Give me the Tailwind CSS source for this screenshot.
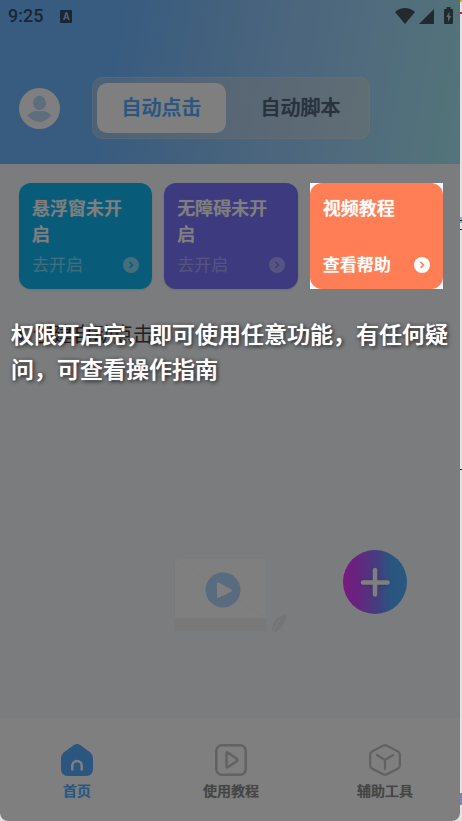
<!DOCTYPE html>
<html lang="zh-CN">
<head>
<meta charset="utf-8">
<meta name="viewport" content="width=device-width, initial-scale=1">
<title>自动点击</title>
<script src="https://cdn.jsdelivr.net/npm/@tailwindcss/browser@4"></script>
</head>
<body class="bg-[#e2e2e2] font-['Roboto','Noto_Sans_CJK_SC',sans-serif]">
<div class="relative min-h-screen pr-[2px] flex">
  <!-- window edge -->
  <div class="absolute inset-y-0 right-0 w-[2px] overflow-hidden" aria-hidden="true">
    <i class="absolute top-0 right-0 w-full h-[2px] bg-[#d9b400]"></i>
    <i class="absolute top-3 right-0 w-full h-[2px] bg-[#d8105c]"></i>
    <i class="absolute top-[217px] right-0 w-full h-[6px] bg-[#8fb4d0]"></i>
    <i class="absolute top-[220px] right-0 w-full h-px bg-[#222222]"></i>
    <i class="absolute top-[229px] right-0 w-full h-px bg-[#5a1020]"></i>
    <i class="absolute top-[469px] right-0 w-full h-px bg-[#222222]"></i>
    <i class="absolute top-[793px] right-0 w-full h-3 bg-[#7d84a8]"></i>
  </div>

  <div class="relative flex-1 flex flex-col bg-[#f7f9fc] rounded-b-lg overflow-hidden">
    <header class="h-[164px] shrink-0 bg-[linear-gradient(100deg,#70b8ff_0%,#70b8ff_25%,#92c8fa_55%,#a2d8fa_78%,#a6eaf4_100%)]">
      <div class="h-8 flex items-center justify-between pl-2 pr-[7px]">
        <div class="flex items-center gap-[17px]">
          <span class="text-[18px] leading-8 text-[#344c68] font-medium">9:25</span>
          <span class="w-3 h-[13px] rounded-[1px] bg-[#344c68] text-[#9cc8f4] text-[10px] leading-[13px] font-bold text-center">A</span>
        </div>
        <div class="flex items-end pb-[2px] text-[#45545e]">
          <svg class="w-5 h-4" viewBox="0 0 20 16" fill="currentColor"><path d="M0 4Q4.500 0 10 0t10 4L10 16z"/></svg>
          <svg class="w-[15px] h-[15px] ml-1" viewBox="0 0 15 15" fill="currentColor"><path d="M15 0v15H0z"/></svg>
          <svg class="w-[9px] h-[17px] ml-[10px]" viewBox="0 0 9 17"><path fill="currentColor" d="M2.500 0h4v2H8q1 0 1 1v13q0 1-1 1H1q-1 0-1-1V3q0-1 1-1h1.500z"/><path fill="#b4d4dc" d="M5.500 4.500 2.200 10H4v5l3.200-6H5.300z"/></svg>
        </div>
      </div>
      <div class="flex items-center gap-8 pl-[19px] mt-[45px]">
        <button class="size-[41px] mt-px rounded-full bg-white overflow-hidden" aria-label="个人中心">
          <svg class="w-full h-full" viewBox="0 0 41 41" fill="#bcdcff"><ellipse cx="20.500" cy="15" rx="6.500" ry="7.200"/><path d="M8.500 27.500Q14 21.500 20.500 23.300 27 21.500 32.500 27.500 27 34 20.500 34T8.500 27.500z"/></svg>
        </button>
        <div class="w-[278px] h-[62px] rounded-[10px] border border-white/15 bg-[#ffe0c8]/30 p-1 flex" role="tablist">
          <button role="tab" aria-selected="true" class="w-[129px] my-px rounded-[10px] bg-white text-[#58acff] text-[20px] font-medium [text-shadow:0_0_1px_currentColor]">自动点击</button>
          <button role="tab" aria-selected="false" class="flex-1 pl-[10px] text-[#52667c] text-[20px] font-medium [text-shadow:0_0_1px_currentColor]">自动脚本</button>
        </div>
      </div>
    </header>

    <main class="relative flex-1 flex flex-col pl-[19px] pr-[17px] pt-[19px]">
      <div class="grid grid-cols-3 gap-3 text-white">
        <button class="h-[106px] rounded-xl bg-[#10b8f2] shadow-sm px-[13px] pt-[13px] pb-2 flex flex-col justify-between text-left">
          <span class="text-[18px] leading-[26px] font-medium [text-shadow:0_0_1px_currentColor]">悬浮窗未开启</span>
          <span class="flex w-full items-center justify-between text-[17px] leading-8 text-white/50">去开启
            <svg class="size-4" viewBox="0 0 16 16"><circle cx="8" cy="8" r="8" fill="currentColor"/><path d="m6.500 5 3 3-3 3" fill="none" stroke="#10b8f2" stroke-width="1.600"/></svg>
          </span>
        </button>
        <button class="h-[106px] rounded-xl bg-[#7a74ff] shadow-sm px-[13px] pt-[13px] pb-2 flex flex-col justify-between text-left">
          <span class="text-[18px] leading-[26px] font-medium [text-shadow:0_0_1px_currentColor]">无障碍未开启</span>
          <span class="flex w-full items-center justify-between text-[17px] leading-8 text-white/40">去开启
            <svg class="size-4" viewBox="0 0 16 16"><circle cx="8" cy="8" r="8" fill="currentColor"/><path d="m6.500 5 3 3-3 3" fill="none" stroke="#7a74ff" stroke-width="1.600"/></svg>
          </span>
        </button>
        <div class="relative z-20 bg-[#f7f9fc]">
          <button class="h-[106px] w-full rounded-xl bg-[#ff7e55] px-[13px] pt-[13px] pb-2 flex flex-col justify-between text-left">
            <span class="text-[18px] leading-[26px] font-medium [text-shadow:0_0_1px_currentColor]">视频教程</span>
            <span class="flex w-full items-center justify-between text-[17px] leading-8 font-medium [text-shadow:0_0_1px_currentColor]">查看帮助
              <svg class="size-4" viewBox="0 0 16 16"><circle cx="8" cy="8" r="8" fill="#fff"/><path d="m6.500 5 3 3-3 3" fill="none" stroke="#ff7e55" stroke-width="1.600"/></svg>
            </span>
          </button>
        </div>
      </div>

      <h2 class="mt-8 flex items-center gap-[10px] text-[20px] leading-7 text-[#444444]"><i class="w-1 h-3 rounded-full bg-[#3474c8]"></i>创建自动点击</h2>

      <svg class="mt-auto mb-[84px] self-center w-[114px] h-[75px]" viewBox="0 0 114 75">
        <rect y="1" width="92" height="71" rx="1" fill="#f3f3f3"/>
        <rect x="1" y="0" width="91" height="59" fill="#fff"/>
        <path d="m1 0 91 59" stroke="#f6f8fb"/>
        <circle cx="49" cy="31" r="17.500" fill="#b2d6ff"/>
        <path d="M44 24.500v13.500L57 31.500z" fill="#fff" stroke="#fff" stroke-width="2" stroke-linejoin="round"/>
        <path d="M98 74Q97 58 113 55 110 72 98 74z" fill="#e9ebed"/><path d="m98 74 8-14" stroke="#f7f9fc" stroke-width=".8"/>
      </svg>

      <button aria-label="添加" class="absolute right-[53px] bottom-[104px] size-16 rounded-full bg-[linear-gradient(90deg,#f034ff_0%,#d048ff_22%,#8084ff_58%,#50acff_75%,#50b0ff_100%)]">
        <svg class="w-full h-full drop-shadow-sm" viewBox="0 0 64 64" fill="none" stroke="#fff" stroke-width="4.500" stroke-linecap="round"><path d="M32 20v24.500M20 32.500h24.500"/></svg>
      </button>
    </main>

    <nav class="h-[103px] -mr-[2px] shrink-0 bg-white grid grid-cols-3 pt-[26px] text-[14px] leading-5 font-medium text-[#8a8a8a] [text-shadow:0_0_1px_currentColor]">
      <a href="#home" class="flex flex-col items-center gap-[5px] text-[#54acff]">
        <svg class="size-8" viewBox="0 0 32 32"><path fill="currentColor" d="M12.500 1.200q3.500-2.400 7 0l9.500 7q3 2.300 3 6V25q0 7-7 7H7q-7 0-7-7V14.200q0-3.700 3-6z"/><path d="M11.300 25.500v-3.700a4.700 4.700 0 0 1 9.400 0v3.700" fill="none" stroke="#fff" stroke-width="2.500" stroke-linecap="round"/></svg>
        首页</a>
      <a href="#guide" class="flex flex-col items-center gap-[5px]">
        <svg class="size-8" viewBox="0 0 32 32" fill="none" stroke="#c4c4c4" stroke-width="2.500" stroke-linejoin="round"><rect x="1.300" y="1.300" width="29.400" height="29.400" rx="5.500"/><path d="M11.500 9.500q0-1.800 1.600-.8l8.600 6q1.500 1.300 0 2.600l-8.600 5.700q-1.600 1-1.600-.8z"/></svg>
        使用教程</a>
      <a href="#tools" class="flex flex-col items-center gap-[5px]">
        <svg class="size-8" viewBox="0 0 32 32" fill="none" stroke="#c4c4c4" stroke-width="2.300" stroke-linejoin="round" stroke-linecap="round"><path d="M14.500 1.600q1.500-.7 3 0l11.500 6q1.800 1 1.800 3v11q0 2-1.800 3L17.500 30.400q-1.500.7-3 0L3 24.600q-1.800-1-1.800-3v-11q0-2 1.800-3z"/><path d="m8 11 8 5 8-5M16 16v9"/></svg>
        辅助工具</a>
    </nav>

    <!-- onboarding mask and hint -->
    <div class="absolute inset-0 z-10 bg-black/50"></div>
    <p class="absolute z-30 top-[318px] left-[11px] right-0 text-[23px] leading-[35px] font-medium text-white [text-shadow:0_0_1px_#fff,1px_1px_4px_#000]">权限开启完，即可使用任意功能，有任何疑问，可查看操作指南</p>
  </div>
</div>
</body>
</html>
